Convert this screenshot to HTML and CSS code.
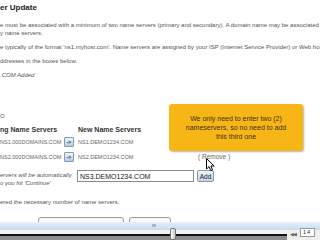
FILE: index.html
```html
<!DOCTYPE html>
<html lang="en">
<head>
    <meta charset="UTF-8">
    <meta name="viewport" content="width=device-width, initial-scale=1.0">
    <title>Name Server Update</title>
    <link rel="stylesheet" href="styles.css">
</head>
<body>
    <div class="screen">
        <div class="content">
            <h1>er Update</h1>
            <p>e must be associated with a minimum of two name servers (primary and secondary). A domain name may be associated<br>y name servers.</p>
            <p>e typically of the format 'ns1.myhost.com'. Name servers are assigned by your ISP (Internet Service Provider) or Web host</p>
            <p>ddresses in the boxes below.</p>
            <p class="note">.COM Added</p>
            <div class="section">O</div>

            <div class="ns-grid">
                <div class="th">ng Name Servers</div>
                <div></div>
                <div class="th col3">New Name Servers</div>
                <div></div>

                <div class="ns">NS1.000DOMAINS.COM</div>
                <button class="arrow">-&gt;</button>
                <div class="ns col3">NS1.DEMO1234.COM</div>
                <div></div>

                <div class="ns">NS2.000DOMAINS.COM</div>
                <button class="arrow">-&gt;</button>
                <div class="ns col3">NS2.DEMO1234.COM</div>
                <div class="remove">( Remove )</div>
            </div>

            <div class="add-row">
                <div class="hint">ervers will be automatically<br>o you hit 'Continue'</div>
                <input type="text" class="ns-input" value="NS3.DEMO1234.COM">
                <button class="add">Add</button>
            </div>

            <p class="done">ered the necessary number of name servers.</p>
            <div class="btns">
                <span class="btn-a"></span>
                <span class="btn-b"></span>
            </div>
        </div>

        <div class="player">
            <div class="player-top"><span class="marker"></span></div>
            <div class="player-bar">
                <div class="track"><span class="thumb"></span></div>
                <div class="controls">
                    <span class="rew">&#9664;&#9664;</span>
                    <span class="time">14</span>
                </div>
            </div>
        </div>

        <div class="callout">We only need to enter two (2)<br>nameservers, so no need to add<br>this third one</div>

        <svg class="cursor" width="10" height="14" viewBox="0 0 10 14">
            <path d="M0.5 0.5 L0.5 11 L3 8.6 L4.8 12.6 L6.6 11.8 L4.9 8 L8.2 8 Z" fill="#fff" stroke="#000" stroke-width="1" stroke-linejoin="round"/>
        </svg>
    </div>
</body>
</html>
```

FILE: styles.css
```css
body {
    margin: 0;
    font-family: "Liberation Sans", Arial, sans-serif;
    color: #555;
    background: #fff;
}
.screen {
    width: 320px;
    height: 240px;
    overflow: hidden;
    position: relative;
    display: flex;
    flex-direction: column;
}
.content {
    flex: 1;
    padding-top: 3px;
    white-space: nowrap;
    overflow: hidden;
}
h1 {
    margin: 0 0 8px;
    font-size: 8px;
    line-height: 10px;
    color: #222;
}
p {
    margin: 0 0 6px;
    font-size: 6px;
    line-height: 8px;
}
.note {
    font-style: italic;
    margin-bottom: 33px;
}
.section {
    font-size: 6px;
    line-height: 8px;
    margin-bottom: 4px;
}
.ns-grid {
    display: grid;
    grid-template-columns: 64px 10px 124px auto;
    grid-template-rows: 10px 15px 15px;
    align-items: center;
}
.ns {
    font-size: 5.5px;
    color: #666;
}
.th {
    font-size: 7px;
    font-weight: bold;
    color: #333;
}
.col3 {
    padding-left: 4px;
}
.remove {
    font-size: 6.5px;
    color: #666;
}
.arrow {
    width: 10px;
    height: 10px;
    padding: 0;
    border: 1px solid #7f9db9;
    border-radius: 1px;
    background: linear-gradient(#eef4fa, #b9cde2);
    font-family: "Liberation Sans", Arial, sans-serif;
    font-size: 5px;
    font-weight: bold;
    color: #234;
    line-height: 8px;
}
.add-row {
    display: grid;
    grid-template-columns: 74px 124px auto;
    align-items: start;
    margin-top: 6px;
}
.hint {
    font-size: 6px;
    line-height: 8px;
    font-style: italic;
    margin-top: 1px;
}
.ns-input {
    margin: 0 0 0 3px;
    width: 117px;
    height: 12px;
    box-sizing: border-box;
    border: 1px solid #8a8a8a;
    padding: 0 2px;
    font-family: "Liberation Sans", Arial, sans-serif;
    font-size: 7px;
    color: #222;
    background: #fff;
}
.add {
    margin: 0 0 0 -1px;
    width: 17px;
    height: 12px;
    padding: 0;
    border: 1px solid #7f9db9;
    border-radius: 2px;
    background: linear-gradient(#f2f6fb, #c4d4e6);
    font-family: "Liberation Sans", Arial, sans-serif;
    font-size: 6.5px;
    color: #222;
}
.done {
    margin: 11px 0 0;
}
.btns {
    display: flex;
    margin-top: 11px;
}
.btn-a,
.btn-b {
    height: 10px;
    border: 1px solid #999;
    border-radius: 3px;
    background: #fafafa;
}
.btn-a {
    margin-left: 38px;
    width: 84px;
}
.btn-b {
    margin-left: 5px;
    width: 40px;
}
.player {
    height: 18px;
    display: flex;
    flex-direction: column;
}
.player-top {
    height: 8px;
    background: linear-gradient(#e8f0fa, #c9daee);
}
.marker {
    display: block;
    margin: 2px 0 0 152px;
    width: 4px;
    height: 3px;
    background: #a9b6c6;
}
.player-bar {
    flex: 1;
    display: flex;
}
.track {
    flex: 1;
    position: relative;
    background: linear-gradient(#f2f2f2 0, #f2f2f2 4px, #111 4px, #111 6px, #8c8c8c 6px);
}
.thumb {
    position: absolute;
    left: 170px;
    top: -2px;
    width: 4px;
    height: 10px;
    border: 1px solid #777;
    border-radius: 2px;
    background: linear-gradient(90deg, #fff, #c8c8c8);
}
.controls {
    width: 33px;
    display: flex;
    align-items: flex-start;
    background: #eee;
}
.rew {
    margin: 1px 0 0 3px;
    font-size: 5px;
    letter-spacing: -1px;
    color: #666;
}
.time {
    margin: -2px 0 0 4px;
    width: 15px;
    height: 9px;
    box-sizing: border-box;
    border: 1px solid #999;
    background: #fff;
    font-size: 5.5px;
    line-height: 7px;
    padding-left: 2px;
    letter-spacing: 1px;
    color: #222;
}
.callout {
    position: absolute;
    left: 169px;
    top: 104px;
    width: 134px;
    height: 47px;
    box-sizing: border-box;
    padding-top: 10px;
    border-radius: 3px;
    background: #f8b616;
    box-shadow: 1px 1px 2px rgba(0, 0, 0, 0.3);
    text-align: center;
    font-size: 7px;
    line-height: 9px;
    color: #3a3320;
}
.cursor {
    position: absolute;
    left: 206px;
    top: 158px;
}
```
